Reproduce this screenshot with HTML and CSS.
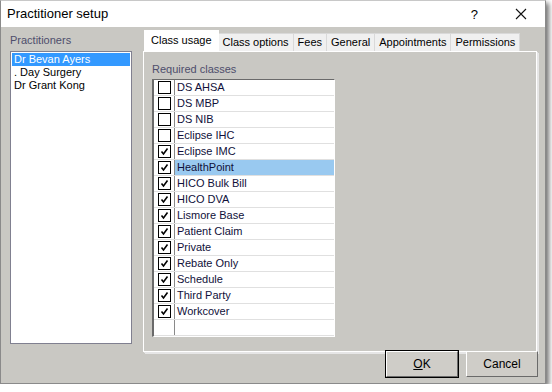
FILE: index.html
```html
<!DOCTYPE html>
<html lang="en">
<head>
  <meta charset="UTF-8">
  <title>Practitioner setup</title>
  <link rel="stylesheet" href="styles.css">
</head>
<body>
  <div class="window">
    <div class="titlebar">
      <span class="title">Practitioner setup</span>
      <span class="help">?</span>
      <svg class="close" width="12" height="12" viewBox="0 0 12 12">
        <path d="M1 1 L11 11 M11 1 L1 11" stroke="#111" stroke-width="1.1" fill="none"/>
      </svg>
    </div>
    <div class="main">
      <div class="left">
        <div class="label">Practitioners</div>
        <div class="pract-list">
          <div class="pract selected">Dr Bevan Ayers</div>
          <div class="pract">. Day Surgery</div>
          <div class="pract">Dr Grant Kong</div>
        </div>
      </div>
      <div class="right">
        <div class="tabs">
          <div class="tab active">Class usage</div>
          <div class="tab">Class options</div>
          <div class="tab">Fees</div>
          <div class="tab">General</div>
          <div class="tab">Appointments</div>
          <div class="tab">Permissions</div>
        </div>
        <div class="panel">
          <div class="label">Required classes</div>
          <div class="class-list" id="classes"></div>
        </div>
      </div>
    </div>
    <div class="footer">
      <div class="btn default"><u>O</u>K</div>
      <div class="btn">Cancel</div>
    </div>
  </div>
  <script>
    const classes = [
      ['DS AHSA', false],
      ['DS MBP', false],
      ['DS NIB', false],
      ['Eclipse IHC', false],
      ['Eclipse IMC', true],
      ['HealthPoint', true],
      ['HICO Bulk Bill', true],
      ['HICO DVA', true],
      ['Lismore Base', true],
      ['Patient Claim', true],
      ['Private', true],
      ['Rebate Only', true],
      ['Schedule', true],
      ['Third Party', true],
      ['Workcover', true]
    ]
    const list = document.getElementById('classes')
    const tick = '<svg width="11" height="11" viewBox="0 0 11 11"><path d="M2.5 5.5 L4.5 8 L8.5 2.5" stroke="#000" stroke-width="1.6" fill="none"/></svg>'

    for (const [name, checked] of classes) {
      const row = document.createElement('div')
      row.className = 'row'
      row.innerHTML = '<div class="check"><span class="box">' + (checked ? tick : '') + '</span></div>' +
        '<div class="name' + (name === 'HealthPoint' ? ' current' : '') + '">' + name + '</div>'
      list.appendChild(row)
    }
    // empty last row
    const empty = document.createElement('div')
    empty.className = 'row'
    empty.innerHTML = '<div class="check"></div><div class="name"></div>'
    list.appendChild(empty)
  </script>
</body>
</html>
```

FILE: styles.css
```css
body {
  margin: 0;
  background: #fff;
  font-family: "Liberation Sans", Arial, sans-serif;
  font-size: 11px;
  color: #000;
}

.window {
  width: 544px;
  height: 382px;
  border: 1px solid #8a8a8a;
  border-top-color: #c8c8c8;
  background: #c9c8c3;
  box-shadow: 3px 3px 5px rgba(0, 0, 0, 0.55);
  display: flex;
  flex-direction: column;
}

.titlebar {
  height: 26px;
  background: #fff;
  display: flex;
  align-items: center;
  padding: 0 0 0 6px;
}

.title {
  font-size: 13px;
  flex: 1;
  padding-bottom: 1px;
}

.help {
  font-size: 13px;
  margin-right: 37px;
}

.close {
  margin-right: 18px;
}

.main {
  display: flex;
  gap: 11px;
  padding: 5px 8px 0 9px;
  height: 312px;
}

.left {
  width: 122px;
  display: flex;
  flex-direction: column;
}

.label {
  color: #4e4e6c;
  height: 16px;
  padding-top: 2px;
}

.pract-list {
  flex: 1;
  margin-top: 1px;
  background: #fff;
  border: 1px solid #808090;
  padding: 1px;
}

.pract {
  height: 13px;
  line-height: 13px;
  padding-left: 2px;
}

.pract.selected {
  background: #3399ff;
  color: #fff;
}

.right {
  width: 394px;
  display: flex;
  flex-direction: column;
}

.tabs {
  display: flex;
  align-items: flex-end;
  height: 19px;
  padding-left: 1px;
}

.tab {
  flex-shrink: 0;
  white-space: nowrap;
  height: 17px;
  line-height: 17px;
  padding: 0 4px;
  background: #f0f0f0;
  border: 1px solid #d9d9d9;
  border-bottom: none;
  margin-left: -1px;
}

.tab.active {
  height: 20px;
  line-height: 18px;
  background: #fff;
  border-color: #fff;
  margin-left: 0;
  padding: 0 6px;
  position: relative;
  z-index: 1;
}

.panel {
  flex: 1;
  border: 1px solid #fff;
  box-shadow: 1px 1px 0 #e6e6e6, 2px 2px 0 #e6e6e6;
  padding: 9px 0 14px 8px;
  display: flex;
  flex-direction: column;
}

.panel .label {
  height: 16px;
}

.class-list {
  width: 180px;
  flex: 1;
  overflow: hidden;
  background: #fff;
  border: 1px solid #fff;
  border-left: 2px solid #6a6a6a;
  border-top: 1px solid #6a6a6a;
}

.row {
  display: flex;
  height: 15px;
  border-bottom: 1px solid #e0e0e0;
}

.check {
  width: 20px;
  border-right: 1px solid #8a8a8a;
  display: flex;
  align-items: center;
  justify-content: center;
}

.box {
  width: 11px;
  height: 11px;
  border: 1px solid #000;
  background: #fff;
  display: flex;
}

.name {
  flex: 1;
  line-height: 15px;
  padding-left: 2px;
  color: #10103a;
}

.name.current {
  background: #99c9f0;
}

.footer {
  display: flex;
  justify-content: flex-end;
  gap: 8px;
  padding: 7px 7px 0 0;
}

.btn {
  width: 70px;
  height: 24px;
  line-height: 24px;
  text-align: center;
  font-size: 12px;
  background: #cfcdc8;
  border: 1px solid;
  border-color: #fff #6a6a6a #6a6a6a #fff;
}

.btn.default {
  outline: 1px solid #000;
}
```
